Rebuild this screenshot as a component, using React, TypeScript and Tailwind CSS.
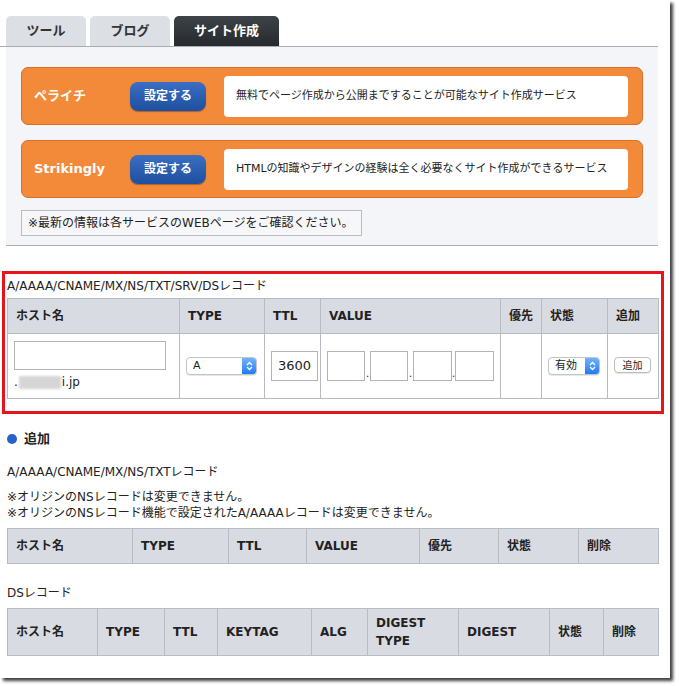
import React from 'react';

const font = { fontFamily: '"DejaVu Sans", "Noto Sans CJK JP", sans-serif' };

function Tabs() {
  return (
    <div className="flex items-end gap-1 border-b border-[#a9adb3] pl-[6px] pt-[16px]">
      <div className="flex h-[30px] w-[80px] items-center justify-center rounded-t-[5px] bg-[#dcdfe4] text-[13px] font-bold text-[#333]">
        ツール
      </div>
      <div className="flex h-[30px] w-[80px] items-center justify-center rounded-t-[5px] bg-[#dcdfe4] text-[13px] font-bold text-[#333]">
        ブログ
      </div>
      <div className="flex h-[30px] w-[105px] items-center justify-center rounded-t-[5px] bg-gradient-to-b from-[#3d4348] to-[#262a2e] text-[13px] font-bold text-white">
        サイト作成
      </div>
    </div>
  );
}

function ServiceCard({ name, desc }: { name: string; desc: string }) {
  return (
    <div className="flex h-[58px] items-center rounded-[7px] border border-[#d8702a] bg-[#f28a3a] pr-[14px]">
      <div className="w-[108px] pl-[12px] text-[13px] font-bold text-white">{name}</div>
      <button className="flex h-[29px] w-[76px] items-center justify-center rounded-[8px] bg-gradient-to-b from-[#3a6fc4] to-[#1f4f9e] text-[12px] font-bold text-white shadow-[0_1px_1px_rgba(0,0,0,0.3)]">
        設定する
      </button>
      <div className="ml-[18px] flex h-[41px] flex-1 items-center whitespace-nowrap rounded-[4px] bg-white pl-[12px] text-[11px] text-[#222]">
        {desc}
      </div>
    </div>
  );
}

function MacSelect({ label, width }: { label: string; width: string }) {
  return (
    <div className={`flex h-[18px] items-center justify-between rounded-[4px] border border-[#c4c4c4] bg-white pl-[6px] text-[11px] text-[#222] shadow-[0_1px_1px_rgba(0,0,0,0.1)] ${width}`}>
      <span>{label}</span>
      <span className="flex h-[16px] w-[14px] items-center justify-center rounded-r-[3px] bg-gradient-to-b from-[#6fb2ff] to-[#1e7bf0]">
        <svg width="7" height="10" viewBox="0 0 7 10">
          <path d="M1 4 L3.5 1.5 L6 4 M1 6 L3.5 8.5 L6 6" stroke="white" strokeWidth="1.3" fill="none" />
        </svg>
      </span>
    </div>
  );
}

const th = 'border border-[#b8bcc2] bg-[#d8dce2] px-[8px] text-left text-[12px] font-bold text-[#222]';
const td = 'border border-[#b8bcc2] px-[6px] text-[12px]';

function EmptyTable({ cols, widths, height }: { cols: string[]; widths: string[]; height: string }) {
  return (
    <table className="w-[652px] table-fixed border-collapse">
      <thead>
        <tr className={height}>
          {cols.map((c, i) => (
            <th key={i} className={`${th} ${widths[i]}`}>
              {c}
            </th>
          ))}
        </tr>
      </thead>
    </table>
  );
}

export default function App() {
  return (
    <div className="min-h-[686px] w-[679px] bg-white text-[#222]" style={font}>
      <div className="h-[678px] w-[670px] bg-white shadow-[3px_3px_3px_rgba(0,0,0,0.75)]">
        <div className="w-[658px]">
          <Tabs />
          <div className="ml-[6px] flex flex-col gap-[16px] border-b border-[#a9adb3] bg-[#f4f5f8] px-[15px] pb-[9px] pt-[20px]">
            <ServiceCard name="ペライチ" desc="無料でページ作成から公開まですることが可能なサイト作成サービス" />
            <div className="-mt-[1px]">
              <ServiceCard name="Strikingly" desc="HTMLの知識やデザインの経験は全く必要なくサイト作成ができるサービス" />
            </div>
            <div className="-mt-[4px] flex h-[26px] w-[341px] items-center border border-[#b9bcc1] bg-[#f7f7f9] pl-[6px] text-[12px] text-[#222]">
              ※最新の情報は各サービスのWEBページをご確認ください。
            </div>
          </div>
        </div>

        <div className="ml-[2px] mt-[25px] h-[143px] w-[662px] border-[3px] border-[#e8141b] pl-[2px]">
          <div className="flex h-[24px] items-center text-[12px]">A/AAAA/CNAME/MX/NS/TXT/SRV/DSレコード</div>
          <table className="w-[652px] table-fixed border-collapse">
            <thead>
              <tr className="h-[35px]">
                <th className={`${th} w-[172px]`}>ホスト名</th>
                <th className={`${th} w-[85px]`}>TYPE</th>
                <th className={`${th} w-[56px]`}>TTL</th>
                <th className={`${th} w-[180px]`}>VALUE</th>
                <th className={`${th} w-[41px]`}>優先</th>
                <th className={`${th} w-[66px]`}>状態</th>
                <th className={th}>追加</th>
              </tr>
            </thead>
            <tbody>
              <tr className="h-[65px]">
                <td className={td}>
                  <div className="h-[29px] w-[152px] border border-[#b3b3b3] bg-white" />
                  <div className="mt-[3px] flex items-center text-[12px]">
                    .<span className="mx-[1px] inline-block h-[13px] w-[42px] bg-[#d6d6d6] blur-[1px]" />i.jp
                  </div>
                </td>
                <td className={td}>
                  <MacSelect label="A" width="w-[71px]" />
                </td>
                <td className={`${td} px-[4px]`}>
                  <div className="flex h-[30px] w-[47px] items-center border border-[#b3b3b3] pl-[6px] text-[13px]">3600</div>
                </td>
                <td className={`${td} px-[3px]`}>
                  <div className="flex items-end text-[10px]">
                    <div className="h-[30px] w-[38px] border border-[#b3b3b3]" />
                    <span className="w-[6px] text-center">.</span>
                    <div className="h-[30px] w-[38px] border border-[#b3b3b3]" />
                    <span className="w-[5px] text-center">.</span>
                    <div className="h-[30px] w-[39px] border border-[#b3b3b3]" />
                    <span className="w-[4px] text-center">.</span>
                    <div className="h-[30px] w-[39px] border border-[#b3b3b3]" />
                  </div>
                </td>
                <td className={td} />
                <td className={`${td} px-[6px]`}>
                  <MacSelect label="有効" width="w-[52px]" />
                </td>
                <td className={`${td} px-[6px]`}>
                  <button className="-mt-[2px] flex h-[16px] w-[37px] items-center justify-center rounded-[4px] border border-[#bdbdbd] bg-white text-[10px] shadow-[0_1px_1px_rgba(0,0,0,0.1)]">
                    追加
                  </button>
                </td>
              </tr>
            </tbody>
          </table>
        </div>

        <div className="pl-[7px]">
          <div className="mt-[15px] flex items-center gap-[7px] text-[13px] font-bold">
            <span className="h-[10px] w-[10px] rounded-full bg-[#2563c9]" />
            追加
          </div>
          <div className="mt-[15px] text-[12px] leading-[16px]">A/AAAA/CNAME/MX/NS/TXTレコード</div>
          <div className="mt-[9px] text-[12px] leading-[16px]">※オリジンのNSレコードは変更できません。</div>
          <div className="text-[12px] leading-[16px]">※オリジンのNSレコード機能で設定されたA/AAAAレコードは変更できません。</div>
          <div className="mt-[7px]">
            <EmptyTable
              height="h-[35px]"
              cols={['ホスト名', 'TYPE', 'TTL', 'VALUE', '優先', '状態', '削除']}
              widths={['w-[125px]', 'w-[96px]', 'w-[78px]', 'w-[113px]', 'w-[79px]', 'w-[80px]', '']}
            />
          </div>
          <div className="mt-[21px] text-[12px] leading-[16px]">DSレコード</div>
          <div className="mt-[7px]">
            <EmptyTable
              height="h-[47px]"
              cols={['ホスト名', 'TYPE', 'TTL', 'KEYTAG', 'ALG', 'DIGEST TYPE', 'DIGEST', '状態', '削除']}
              widths={['w-[90px]', 'w-[67px]', 'w-[53px]', 'w-[94px]', 'w-[56px]', 'w-[91px]', 'w-[91px]', 'w-[54px]', '']}
            />
          </div>
        </div>
      </div>
    </div>
  );
}
